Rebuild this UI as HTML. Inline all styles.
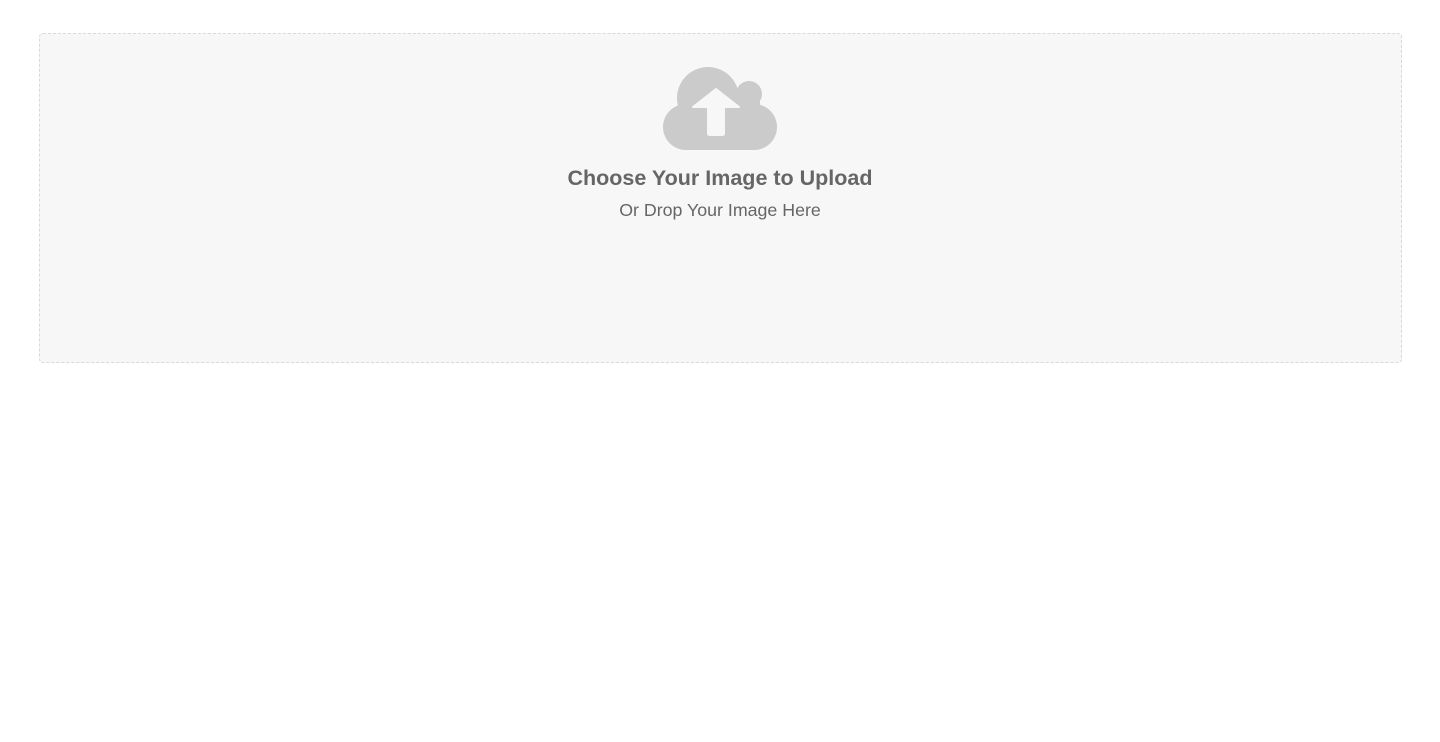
<!DOCTYPE html>
<html><head><style>
body{margin:0;background:#fff;font-family:"Liberation Sans",Arial,sans-serif;}
.box{position:absolute;left:39px;top:33px;width:1361px;height:328px;background:#f7f7f7;border:1px dashed #d9d9d9;border-radius:4px;}
.t1{position:absolute;top:166px;left:0;width:1440px;text-align:center;font-size:21.5px;font-weight:bold;color:#666;}
.t2{position:absolute;top:200px;left:0;width:1440px;text-align:center;font-size:17.8px;color:#666;}
</style></head><body>
<div class="box"></div>
<svg style="position:absolute;left:0;top:0" width="1440" height="200">
<g fill="#cbcbcb">
<circle cx="708" cy="98" r="31"/>
<circle cx="749" cy="94" r="13"/>
<rect x="663" y="104" width="114" height="46" rx="23"/>
<rect x="690" y="100" width="70" height="40"/>
</g>
<path d="M716 89 L739 107 L724 107 L724 133 Q724 135 722 135 L710 135 Q708 135 708 133 L708 107 L693 107 Z" fill="#f7f7f7" stroke="#f7f7f7" stroke-width="2" stroke-linejoin="round"/>
</svg>
<div class="t1">Choose Your Image to Upload</div>
<div class="t2">Or Drop Your Image Here</div>
</body></html>
